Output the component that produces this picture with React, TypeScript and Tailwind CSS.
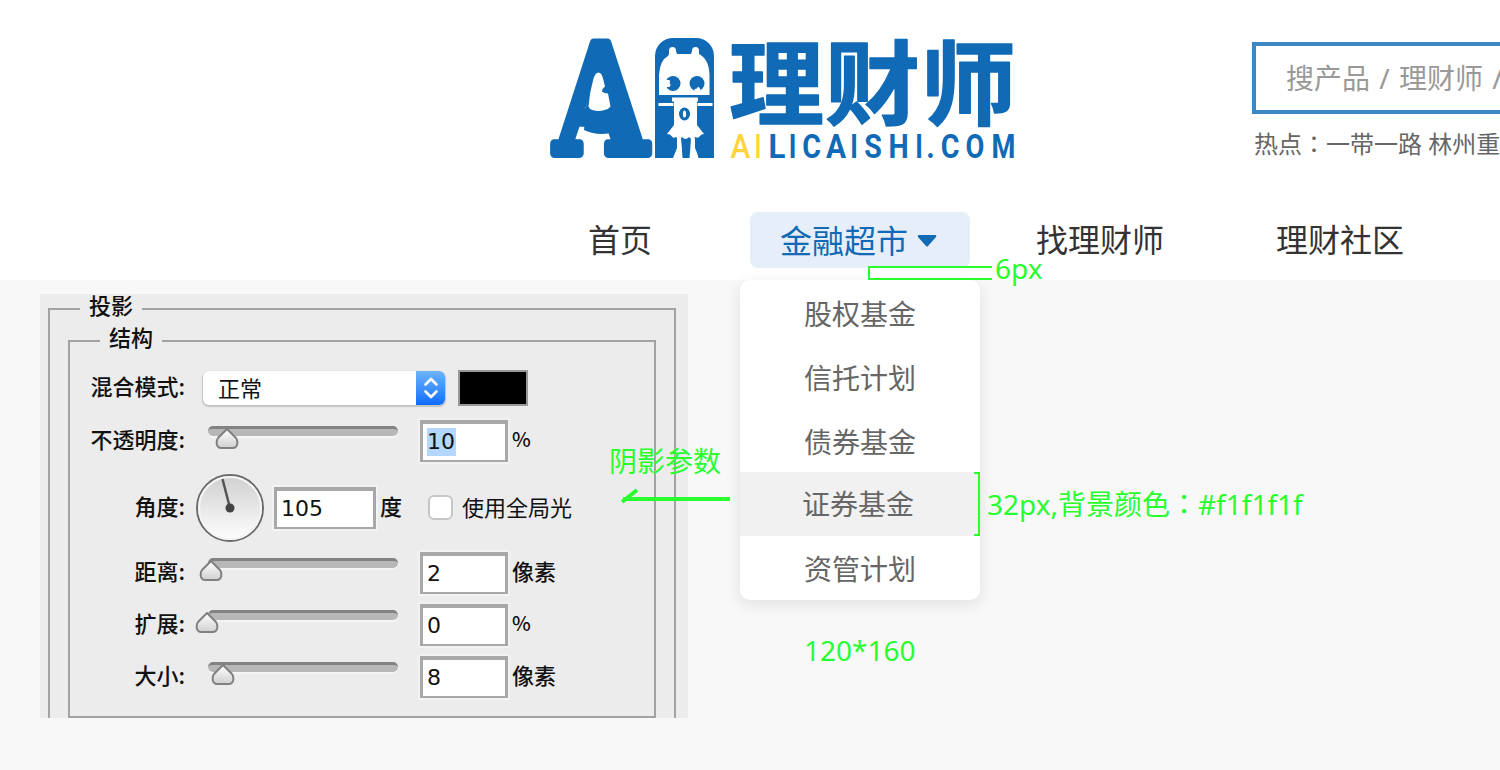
import React from "react";

const CJK = "font-['Noto_Sans','Noto_Sans_CJK_SC',sans-serif]";

const domain: [string, number, number][] = [
  ["A", 740.5, 0.92], ["I", 758, 0.8], ["L", 777, 0.96], ["I", 792.5, 0.8], ["C", 811.5, 0.88],
  ["A", 836, 0.92], ["I", 854, 0.8], ["S", 873, 0.88], ["H", 898.5, 0.88], ["I", 919, 0.8],
  [".", 930.5, 0.9], ["C", 950, 0.88], ["O", 975, 0.84], ["M", 1003.5, 0.84],
];

function Logo() {
  return (
    <svg className="block overflow-visible" width="470" height="124" viewBox="548 36 470 124" fill="#106ab6">
      <text
        transform="translate(601 153) scale(.79 1)"
        textAnchor="middle"
        fontSize="150"
        fontWeight="700"
        stroke="#106ab6"
        strokeWidth="10"
        strokeLinejoin="round"
        style={{ fontFamily: "'DejaVu Serif', serif" }}
      >
        A
      </text>
      <path d="M590 62h18l12 68q-19 8-36 0z" />
      <path fill="#fff" d="M598.500 72.500q3 0 4.500 6l2 8q-3 2-3 5 2 2 6 2l2.500 13q-2 3-6 3.500-6 2-12 0-3-.500-4-3.500 1-14 5-28 2-6 5-6z" />
      <path d="M655 158V56a18 18 0 0 1 18-18h23a18 18 0 0 1 18 18v102z" />
      <g fill="#fff">
        <path d="M659 95V75q1-15 9-19l1-2v-3q0-4 3.500-4t3.500 4l1 3h14l1-3q0-4 3.500-4t3.500 4v3q10 5 10.500 21v20z" />
        <path d="M672 97.500h26v4h-26zM658.500 103h15v3h-15zM697.500 103h15v3h-15z" />
        <path d="M674 101h23v24l7 9q-3 0-4 2-2 3-5 1-3 4-6 0-3.500 4-7 0-3 4-6 0-3 2-4.500-1-1-2-4.500-2l7-9z" />
        <path d="M677 138h4q1 10 1.500 20h-9.500q2-5 4-10zM691 138h4v10q2 4 3.500 10h-9q1-10 1.500-20z" />
      </g>
      <circle cx="673" cy="83.500" r="7.500" />
      <circle cx="697" cy="83.500" r="7.500" />
      <path fill="#fff" d="M664.500 80h4.500q2 1 .500 3 2 2 0 4h-5zM695 92l-.500-3 2.500-.500 1-2 2 2 1 3.500z" />
      <ellipse cx="684.500" cy="114" rx="5.500" ry="6.500" />
      <ellipse cx="684.500" cy="114" rx="1.600" ry="3.500" fill="#fff" />
      <text
        transform="translate(729 118) scale(1 .97)"
        fontSize="95"
        fontWeight="700"
        textLength="287"
        stroke="#106ab6"
        strokeWidth="1.500"
        strokeLinejoin="round"
        style={{ fontFamily: "'Noto Sans CJK SC', sans-serif" }}
      >
        理财师
      </text>
      {domain.map(([c, x, s], i) => (
        <text
          key={i}
          transform={`translate(${x} 158) scale(${s} 1)`}
          textAnchor="middle"
          fontSize="32.500"
          fontWeight={i < 2 ? 500 : 700}
          fill={i < 2 ? "#ffd43a" : "#106ab6"}
          style={{ fontFamily: "Roboto, sans-serif" }}
        >
          {c}
        </text>
      ))}
    </svg>
  );
}

function Slider({ at }: { at: number }) {
  return (
    <div className="relative h-[34px] w-[202px] pl-3 pt-[2px]">
      <div className="h-[10px] rounded-[5px] border-t-[3px] border-[#828282] bg-[#b7b7b7] shadow-[0_2px_0_#f4f4f4]" />
      <svg className="absolute top-[3px]" style={{ left: at }} width="24" height="24" viewBox="0 0 24 24">
        <defs>
          <linearGradient id="thumb" x2="0" y2="1">
            <stop stopColor="#fff" />
            <stop offset="1" stopColor="#d0d0d0" />
          </linearGradient>
        </defs>
        <path d="M12 2L21 11Q23 14 22 18Q21 21 18 21H6Q3 21 2 18Q1 14 3 11Z" fill="url(#thumb)" stroke="#808080" strokeWidth="2" strokeLinejoin="round" />
      </svg>
    </div>
  );
}

function Label({ children }: { children: React.ReactNode }) {
  return <div className="w-[115px] shrink-0 pb-[6px] text-right">{children}</div>;
}

function Field({ value, width, selected }: { value: string; width: string; selected?: boolean }) {
  return (
    <div className={`${width} flex h-[42px] items-center border-x-[3px] border-t-[4px] border-b-2 border-[#a8a8a8] bg-white pl-[4px] font-['DejaVu_Sans',sans-serif] text-[22px] font-normal shadow-[0_0_0_2px_#f2f2f2]`}>
      <span className={selected ? "bg-[#b3d7ff] pr-px leading-[28px]" : "pr-px leading-[28px]"}>{value}</span>
    </div>
  );
}

function SliderRow({ label, at, value, unit, height, selected }: { label: string; at: number; value: string; unit: string; height: string; selected?: boolean }) {
  return (
    <div className={`${height} flex items-center`}>
      <Label>{label}</Label>
      <div className="ml-[11px]"><Slider at={at} /></div>
      <div className="ml-[22px]"><Field value={value} width="w-[88px]" selected={selected} /></div>
      <span className={unit === "%" ? "ml-[4px] pb-[5px] text-[20px]" : "ml-[4px] pb-[6px]"}>{unit}</span>
    </div>
  );
}

function ShadowPanel() {
  return (
    <section className="mt-[14px] h-[424px] w-[648px] shrink-0 overflow-hidden bg-[#ececec] pl-2 pr-3 font-['Noto_Sans_CJK_SC',sans-serif] text-[22px] font-medium leading-[22px] text-[#111]">
      <fieldset className="-mt-px h-[442px] border-2 border-[#a2a2a2]">
        <legend className="ml-[30px] px-[9px] pb-[10px]">投影</legend>
        <fieldset className="mx-[18px] h-[393px] border-2 border-[#a2a2a2]">
          <legend className="ml-[30px] px-[9px] pb-[10px]">结构</legend>
          <div className="pt-[5px]">
            <div className="flex h-[52px] items-center">
              <Label>混合模式:</Label>
              <div className="ml-[18px] flex h-[34px] w-[242px] items-stretch overflow-hidden rounded-[6px] bg-white shadow-[0_1px_1px_1px_#c4c4c4]">
                <span className="flex flex-1 items-center pb-[3px] pl-[15px] font-normal">正常</span>
                <span className="flex w-[29px] items-center justify-center bg-linear-to-b from-[#6cb3fa] to-[#0a6bff]">
                  <svg width="16" height="22" viewBox="0 0 16 22" fill="none" stroke="#fff" strokeWidth="2.600" strokeLinecap="round" strokeLinejoin="round">
                    <path d="M2.500 7.500L8 2l5.500 5.500M2.500 14.500L8 20l5.500-5.500" />
                  </svg>
                </span>
              </div>
              <div className="ml-[13px] h-[36px] w-[70px] border-2 border-[#999] bg-black" />
            </div>
            <SliderRow label="不透明度:" at={19} value="10" unit="%" height="h-[54px]" selected />
            <div className="flex h-[79px] items-center">
              <Label>角度:</Label>
              <svg className="ml-[10px] shrink-0" width="70" height="70" viewBox="0 0 70 70">
                <defs>
                  <linearGradient id="dial" x2="0" y2="1">
                    <stop stopColor="#cfcfcf" />
                    <stop offset="1" stopColor="#fff" />
                  </linearGradient>
                </defs>
                <circle cx="35" cy="35" r="33" fill="url(#dial)" stroke="#6b6b6b" strokeWidth="2" />
                <circle cx="35" cy="35" r="31" fill="none" stroke="#f4f4f4" strokeWidth="2" />
                <path d="M35 35L27.500 6" stroke="#555" strokeWidth="2.500" />
                <circle cx="35" cy="35" r="4.500" fill="#444" />
              </svg>
              <div className="ml-[9px]"><Field value="105" width="w-[102px]" /></div>
              <span className="ml-[4px] pb-[6px]">度</span>
              <span className="ml-[26px] h-[25px] w-[25px] rounded-[6px] border-2 border-[#c6c6c6] bg-white" />
              <span className="ml-[9px] pb-[4px] font-normal">使用全局光</span>
            </div>
            <SliderRow label="距离:" at={3} value="2" unit="像素" height="h-[52px]" />
            <SliderRow label="扩展:" at={-1} value="0" unit="%" height="h-[52px]" />
            <SliderRow label="大小:" at={15} value="8" unit="像素" height="h-[52px]" />
          </div>
        </fieldset>
      </fieldset>
    </section>
  );
}

const menu = ["股权基金", "信托计划", "债券基金", "证券基金", "资管计划"];

function Colon() {
  return <span className="font-['Noto_Sans_CJK_TC',sans-serif]" lang="zh-TW">：</span>;
}

export default function App() {
  return (
    <div className={`${CJK} relative h-[770px] w-[1500px] overflow-hidden bg-[#f8f8f8]`}>
      <header className="h-[280px] bg-white">
        <div className="flex h-[212px] items-start pl-[548px] pt-[36px]">
          <Logo />
          <div className="ml-[234px] mt-[6px] w-[248px] shrink-0 overflow-hidden whitespace-nowrap">
            <div className="flex h-[72px] w-[600px] items-center border-4 border-[#3b88c5] pl-[30px] text-[28px] text-[#999] [word-spacing:2px]">
              搜产品 / 理财师 / 资讯
            </div>
            <p className="mt-[12px] pl-[2px] text-[24px] leading-[34px] text-[#666]">热点<Colon />一带一路 林州重机</p>
          </div>
        </div>
        <nav className="flex h-[56px] items-center whitespace-nowrap text-[32px] leading-[48px] text-[#333]">
          <a className="ml-[588px] w-[64px]">首页</a>
          <a className="ml-[98px] flex h-[56px] w-[220px] items-center rounded-[8px] bg-[#e6eefa] pl-[30px] pt-[2px] text-[#106ab6]">
            金融超市
            <svg className="ml-[9px]" width="20" height="12" viewBox="0 0 20 12" fill="currentColor"><path d="M1.500 0h17q1.500.500.500 2l-8 9q-1 1-2 0l-8-9q-1-1.500.500-2z" /></svg>
          </a>
          <a className="ml-[66px] w-[128px]">找理财师</a>
          <a className="ml-[112px] w-[128px]">理财社区</a>
        </nav>
      </header>

      <main className="flex items-start pl-[40px]">
        <ShadowPanel />
        <ul className="ml-[52px] w-[240px] overflow-hidden rounded-[10px] bg-white text-center text-[28px] leading-[64px] text-[#666] shadow-[0_4px_16px_rgba(0,0,0,0.1)]">
          {menu.map((m, i) => (
            <li key={m} className={i === 3 ? "h-16 bg-[#f1f1f1] pr-[4px]" : i < 3 ? "h-16 pt-[2px]" : "h-16 pt-px"}>{m}</li>
          ))}
        </ul>
      </main>

      <div className="pointer-events-none absolute inset-0 whitespace-nowrap text-[28px] leading-[36px] text-[#29ff2e]">
        <i className="absolute left-[868px] top-[266px] h-[14px] w-[124px] border-y-2 border-l-2 border-[#29ff2e]" />
        <span className="absolute left-[995px] top-[250px]">6px</span>
        <i className="absolute left-[974px] top-[472px] h-[64px] w-[6px] border-y-2 border-r-2 border-[#29ff2e]" />
        <span className="absolute left-[987px] top-[485px]">32px,背景颜色<Colon />#f1f1f1f</span>
        <span className="absolute left-[609px] top-[443px]">阴影参数</span>
        <svg className="absolute left-[620px] top-[486px]" width="112" height="20" fill="none" stroke="currentColor" strokeWidth="4">
          <path d="M3 13h107M2 16L17 4" />
        </svg>
        <span className="absolute left-[804px] top-[632px]">120*160</span>
      </div>
    </div>
  );
}
